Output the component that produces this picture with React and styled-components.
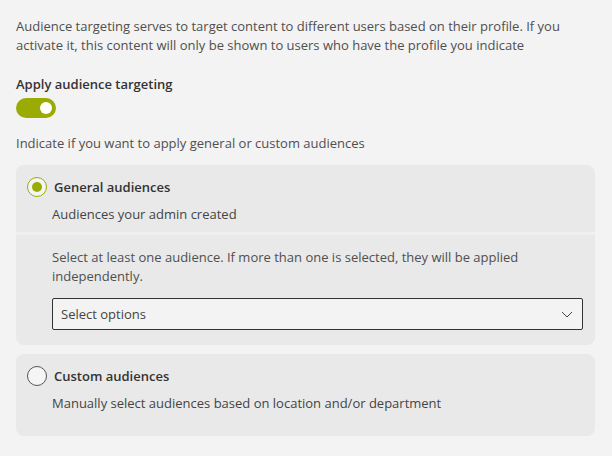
import React, { useState } from 'react';
import styled, { createGlobalStyle } from 'styled-components';

const GlobalStyle = createGlobalStyle`
  html, body {
    margin: 0;
    padding: 0;
    background: #f3f3f3;
  }
  body {
    font-family: 'Open Sans', 'Noto Sans', sans-serif;
    font-size: 13px;
    color: #505050;
  }
`;

const Page = styled.div`
  padding: 17px 17px 0 16px;
  display: flex;
  flex-direction: column;
`;

const Text = styled.p`
  margin: 0;
  line-height: 19px;
  color: #4f4f4f;
`;

const Label = styled.div`
  margin-top: 19px;
  font-weight: 600;
  color: #333;
  line-height: 20px;
`;

const Toggle = styled.button`
  margin-top: 4px;
  width: 40px;
  height: 20px;
  border: none;
  border-radius: 10px;
  padding: 0;
  background: ${(p) => (p.$on ? '#9aab03' : '#8a8a8a')};
  display: flex;
  align-items: center;
  justify-content: ${(p) => (p.$on ? 'flex-end' : 'flex-start')};
  padding: 0 4px;
  cursor: pointer;

  &::after {
    content: '';
    width: 12px;
    height: 12px;
    border-radius: 50%;
    background: #fff;
  }
`;

const Hint = styled(Text)`
  margin-top: 16px;
`;

const Card = styled.div`
  margin-top: ${(p) => p.$gap}px;
  background: #e9e9e9;
  border-radius: 8px;
  overflow: hidden;
`;

const CardHead = styled.div`
  padding: 12px 12px ${(p) => p.$bottom}px 11px;
`;

const OptionRow = styled.label`
  display: flex;
  align-items: center;
  gap: 7px;
  height: 20px;
  cursor: pointer;
`;

const Radio = styled.span`
  width: 20px;
  height: 20px;
  box-sizing: border-box;
  border-radius: 50%;
  border: 1px solid ${(p) => (p.$checked ? '#9aab03' : '#555')};
  background: #f5f5f5;
  display: flex;
  align-items: center;
  justify-content: center;

  &::after {
    content: '';
    width: 10px;
    height: 10px;
    border-radius: 50%;
    background: ${(p) => (p.$checked ? '#9aab03' : 'transparent')};
  }
`;

const OptionTitle = styled.span`
  font-weight: 600;
  color: #333;
`;

const OptionDesc = styled(Text)`
  margin: 8px 0 0 25px;
  color: #444;
`;

const Divider = styled.div`
  height: 3px;
  background: #efefef;
`;

const CardBody = styled.div`
  padding: 13px 12px 15px 36px;
`;

const Select = styled.div`
  margin-top: 12px;
  height: 32px;
  box-sizing: border-box;
  border: 1px solid #333;
  border-radius: 2px;
  background: #f3f3f3;
  display: flex;
  align-items: center;
  justify-content: space-between;
  padding: 0 9px 0 8px;
  color: #444;
`;

const Chevron = () => (
  <svg width="12" height="7" viewBox="0 0 12 7" fill="none">
    <path d="M1 1l5 5 5-5" stroke="#444" strokeWidth="1" />
  </svg>
);

export default function App() {
  const [on, setOn] = useState(true);
  const [choice, setChoice] = useState('general');

  return (
    <>
      <GlobalStyle />
      <Page>
        <Text>
          Audience targeting serves to target content to different users based on their profile. If you
          activate it, this content will only be shown to users who have the profile you indicate
        </Text>
        <Label>Apply audience targeting</Label>
        <Toggle $on={on} onClick={() => setOn(!on)} />
        <Hint>Indicate if you want to apply general or custom audiences</Hint>

        <Card $gap={12}>
          <CardHead $bottom={8}>
            <OptionRow onClick={() => setChoice('general')}>
              <Radio $checked={choice === 'general'} />
              <OptionTitle>General audiences</OptionTitle>
            </OptionRow>
            <OptionDesc>Audiences your admin created</OptionDesc>
          </CardHead>
          {choice === 'general' && (
            <>
              <Divider />
              <CardBody>
                <Text>
                  Select at least one audience. If more than one is selected, they will be applied
                  independently.
                </Text>
                <Select>
                  <span>Select options</span>
                  <Chevron />
                </Select>
              </CardBody>
            </>
          )}
        </Card>

        <Card $gap={9}>
          <CardHead $bottom={23}>
            <OptionRow onClick={() => setChoice('custom')}>
              <Radio $checked={choice === 'custom'} />
              <OptionTitle>Custom audiences</OptionTitle>
            </OptionRow>
            <OptionDesc>Manually select audiences based on location and/or department</OptionDesc>
          </CardHead>
        </Card>
      </Page>
    </>
  );
}
